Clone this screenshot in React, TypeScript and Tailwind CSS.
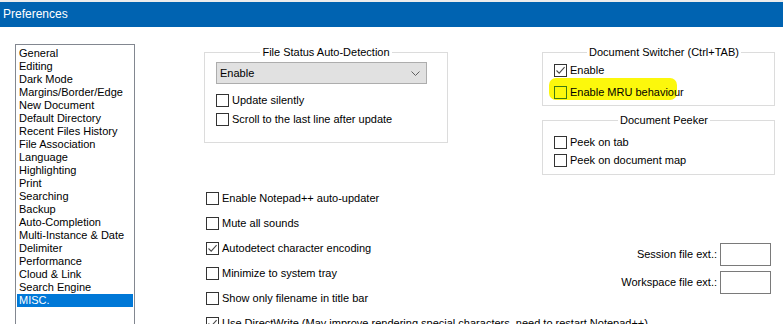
import React from 'react';

const categories = [
  'General',
  'Editing',
  'Dark Mode',
  'Margins/Border/Edge',
  'New Document',
  'Default Directory',
  'Recent Files History',
  'File Association',
  'Language',
  'Highlighting',
  'Print',
  'Searching',
  'Backup',
  'Auto-Completion',
  'Multi-Instance & Date',
  'Delimiter',
  'Performance',
  'Cloud & Link',
  'Search Engine',
  'MISC.',
];

const miscOptions = [
  { label: 'Enable Notepad++ auto-updater', checked: false },
  { label: 'Mute all sounds', checked: false },
  { label: 'Autodetect character encoding', checked: true },
  { label: 'Minimize to system tray', checked: false },
  { label: 'Show only filename in title bar', checked: false },
  { label: 'Use DirectWrite (May improve rendering special characters, need to restart Notepad++)', checked: true },
];

const CheckBox = ({ checked, green }: { checked?: boolean; green?: boolean }) => (
  <span
    className={`w-[13px] h-[13px] shrink-0 flex items-center justify-center border ${
      green ? 'border-[#3f7a12] bg-transparent' : 'border-[#333333] bg-white'
    }`}
  >
    {checked && (
      <svg width="11" height="11" viewBox="0 0 11 11">
        <path d="M1.5 5.5 L4.2 8.2 L9.6 2.2" fill="none" stroke="#4a4a4a" strokeWidth="1.1" />
      </svg>
    )}
  </span>
);

const Option = ({ label, checked, className = '' }: { label: string; checked?: boolean; className?: string }) => (
  <div className={`flex items-center whitespace-nowrap ${className}`}>
    <CheckBox checked={checked} />
    <span className="ml-[3px]">{label}</span>
  </div>
);

export default function App() {
  return (
    <div className="w-[783px] h-[324px] overflow-hidden bg-white text-black text-[11px] leading-[13px] font-['Liberation_Sans',Arial,sans-serif]">
      <div className="h-[2px] bg-[#ececec]" />
      <div className="h-[25px] bg-[#0063b1] text-white text-[12px] flex items-center pl-[3px]">Preferences</div>

      <div className="flex">
        {/* category list */}
        <div className="ml-[15px] mt-[17px] w-[120px] h-[300px] border border-[#828790] pt-[2px] px-[1px]">
          {categories.map((c) => (
            <div
              key={c}
              className={`h-[13px] pl-[2px] whitespace-nowrap ${c === 'MISC.' ? 'bg-[#0078d7] text-white' : ''}`}
            >
              {c}
            </div>
          ))}
        </div>

        <div className="flex-1 flex flex-col">
          <div className="flex mt-[19px]">
            <fieldset className="ml-[69px] w-[244px] h-[97px] border border-[#dcdcdc] px-[11px]">
              <legend className="mx-auto px-[2px]">File Status Auto-Detection</legend>
              <div className="mt-[3px] w-[211px] h-[22px] bg-[#e1e1e1] border border-[#adadad] flex items-center justify-between pl-[3px] pr-[6px]">
                <span>Enable</span>
                <svg width="9" height="5" viewBox="0 0 9 5">
                  <path d="M0.5 0.5 L4.5 4.5 L8.5 0.5" fill="none" stroke="#606060" strokeWidth="1" />
                </svg>
              </div>
              <Option label="Update silently" className="h-[19px] mt-[7px]" />
              <Option label="Scroll to the last line after update" className="h-[19px]" />
            </fieldset>

            <div className="ml-[94px] w-[233px] flex flex-col">
              <fieldset className="border border-[#dcdcdc] pl-[11px] pb-[2px]">
                <legend className="mx-auto px-[2px]">Document Switcher (Ctrl+TAB)</legend>
                <Option label="Enable" checked className="h-[22px]" />
                <div className="relative h-[22px] flex items-center">
                  <span className="absolute left-[-5px] top-[-3px] w-[128px] h-[22px] rounded-[7px] bg-[#fcf80c]" />
                  <div className="relative flex items-center whitespace-nowrap">
                    <CheckBox green />
                    <span className="ml-[3px]">Enable MRU behaviour</span>
                  </div>
                </div>
              </fieldset>

              <fieldset className="mt-[8px] border border-[#dcdcdc] pl-[11px] pb-[5px]">
                <legend className="mx-auto px-[2px]">Document Peeker</legend>
                <Option label="Peek on tab" className="h-[18px] mt-[6px]" />
                <Option label="Peek on document map" className="h-[18px]" />
              </fieldset>
            </div>
          </div>

          <div className="flex mt-[11px]">
            <div className="ml-[71px] w-[300px] shrink-0 flex flex-col">
              {miscOptions.map((o) => (
                <Option key={o.label} label={o.label} checked={o.checked} className="h-[25px]" />
              ))}
            </div>
            <div className="ml-auto mr-[12px] mt-[57px] shrink-0 flex flex-col gap-[5px]">
              <div className="flex items-center justify-end gap-[3px] whitespace-nowrap">
                <span>Session file ext.:</span>
                <span className="w-[51px] h-[23px] border border-[#7a7a7a] bg-white" />
              </div>
              <div className="flex items-center justify-end gap-[3px] whitespace-nowrap">
                <span>Workspace file ext.:</span>
                <span className="w-[51px] h-[23px] border border-[#7a7a7a] bg-white" />
              </div>
            </div>
          </div>
        </div>
      </div>
    </div>
  );
}
